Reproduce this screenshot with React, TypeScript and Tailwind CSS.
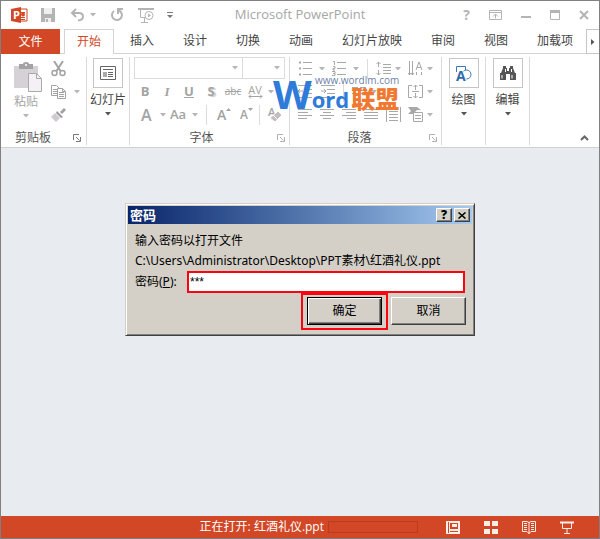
import React, { useState } from 'react';

const tabs = ['开始', '插入', '设计', '切换', '动画', '幻灯片放映', '审阅', '视图', '加载项'];

const Caret = ({ dark = false }: { dark?: boolean }) => (
  <svg width="6" height="4" viewBox="0 0 6 4" className={dark ? 'shrink-0 text-[#555]' : 'shrink-0 text-[#b5b5b5]'}>
    <path d="M0 0h6L3 3.5z" fill="currentColor" />
  </svg>
);

const Launcher = ({ dark = false }: { dark?: boolean }) => (
  <button aria-label="更多选项" className={dark ? 'text-[#777]' : 'text-[#b0b0b0]'}>
    <svg width="8" height="8" viewBox="0 0 8 8" fill="none" stroke="currentColor">
      <path d="M.5 6V.5H6M3 3l3.5 3.5M7.5 3v4.5H3" />
    </svg>
  </button>
);

const Divider = () => <div className="h-5 w-px shrink-0 bg-[#dcdcdc]" />;

type GroupProps = {
  label?: string;
  className: string;
  launcher?: 'dark' | 'light';
  children: React.ReactNode;
};

const Group = ({ label, className, launcher, children }: GroupProps) => (
  <section className={`flex shrink-0 flex-col justify-between border-r border-[#dadada] ${className}`}>
    {children}
    {label && (
      <div className="flex h-[14px] items-center leading-[14px] text-[#555]">
        <span className="flex-1 pr-2 text-center">{label}</span>
        {launcher && <Launcher dark={launcher === 'dark'} />}
      </div>
    )}
  </section>
);

const BigButton = ({ label, children }: { label: string; children: React.ReactNode }) => (
  <button className="flex flex-col items-center pt-px text-[#444]">
    <span className="flex size-[30px] items-center justify-center border border-[#c6c6c6]">{children}</span>
    <span className="mt-1 mb-1 leading-4 whitespace-nowrap">{label}</span>
    <Caret dark />
  </button>
);

// Icon made of horizontal lines, given as [x, y, length]
const Lines = ({ rows, children }: { rows: number[][]; children?: React.ReactNode }) => (
  <svg width="15" height="15" viewBox="0 0 15 15" fill="none" stroke="#a8a8a8" className="shrink-0">
    {rows.map(([x, y, w]) => (
      <path key={`${x}-${y}`} d={`M${x} ${y + 0.5}h${w}`} />
    ))}
    {children}
  </svg>
);

const TitleBar = () => (
  <header className="grid h-7 grid-cols-[1fr_auto_1fr] items-center text-[#b4b4b4]">
    <div className="flex items-center pl-[10px]">
      <svg width="17" height="16" viewBox="0 0 17 16">
        <path d="M9 2h7v12H9z" fill="#fff" stroke="#d24726" />
        <path d="M10 5h4v1h-4zM10 10h4v1h-4zM10 12h4v1h-4z" fill="#d24726" />
        <circle cx="12" cy="7.500" r="2" fill="#d24726" />
        <path d="M0 2 10 0v16L0 14z" fill="#d24726" />
        <text x="2" y="12" fontSize="11" fontWeight="700" fontFamily="Open Sans" fill="#fff">P</text>
      </svg>
      <button aria-label="保存" className="ml-[13px]">
        <svg width="14" height="14" viewBox="0 0 14 14">
          <path d="M0 0h14v14H0z" fill="currentColor" />
          <path d="M3 0h8v6H3zM4 10h6v4H4z" fill="#f1eef1" />
          <path d="M5 11h2v3H5z" fill="currentColor" />
        </svg>
      </button>
      <button aria-label="撤消" className="ml-[15px]">
        <svg width="15" height="14" viewBox="0 0 15 14" fill="none" stroke="currentColor" strokeWidth="2">
          <path d="M6 1 2 5l4 4M2 5h7q4 0 4 3.500T8 12.500" />
        </svg>
      </button>
      <span className="ml-[5px]"><Caret /></span>
      <button aria-label="恢复" className="ml-[14px]">
        <svg width="14" height="14" viewBox="0 0 14 14" fill="none" stroke="currentColor" strokeWidth="2">
          <path d="M9 2.500A5 5 0 1 1 4 3M8 6V1h5" />
        </svg>
      </button>
      <button aria-label="从头开始放映" className="ml-[14px]">
        <svg width="16" height="15" viewBox="0 0 16 15" fill="none" stroke="currentColor">
          <path d="M0 1h16" strokeWidth="2" />
          <path d="M2.500 1v8.500H7M6.500 10v4M3 14.500h7" />
          <circle cx="11" cy="7.500" r="4" fill="#fff" />
          <path d="m10 5.500 3 2-3 2z" fill="currentColor" stroke="none" />
        </svg>
      </button>
      <button aria-label="自定义快速访问工具栏" className="ml-[13px]">
        <svg width="6" height="7" viewBox="0 0 6 7" fill="#777"><path d="M0 0h6v1H0zM0 3h6L3 6z" /></svg>
      </button>
    </div>
    <h1 className="text-[13px] text-[#a6a6a6]">Microsoft PowerPoint</h1>
    <div className="flex items-center justify-end gap-[19px] pr-[10px]">
      <button aria-label="帮助" className="text-[14px] leading-4 font-bold">?</button>
      <button aria-label="功能区显示选项">
        <svg width="13" height="10" viewBox="0 0 13 10" fill="none" stroke="currentColor">
          <path d="M.5.5h12v9H.5zM.5 2.500h12M6.500 8.500V4M4 6.500 6.500 4 9 6.500" />
        </svg>
      </button>
      <button aria-label="最小化">
        <svg width="10" height="10" viewBox="0 0 10 10" fill="currentColor"><path d="M0 6h10v2H0z" /></svg>
      </button>
      <button aria-label="最大化">
        <svg width="10" height="10" viewBox="0 0 10 10" fill="none" stroke="currentColor">
          <path d="M.5.5h9v9h-9z" /><path d="M0 1.500h10" strokeWidth="3" />
        </svg>
      </button>
      <button aria-label="关闭">
        <svg width="10" height="10" viewBox="0 0 10 10" stroke="currentColor" strokeWidth="2"><path d="m1 1 8 8M9 1 1 9" /></svg>
      </button>
    </div>
  </header>
);

const TabBar = () => {
  const [active, setActive] = useState('开始');

  return (
    <nav className="flex h-[25px] text-[#444]">
      <button className="w-[59px] bg-[#d24726] text-white">文件</button>
      <div className="flex flex-1 gap-[3px] border-b border-[#d4d4d4] pl-1">
        {tabs.map((tab) => (
          <button
            key={tab}
            onClick={() => setActive(tab)}
            className={
              tab === active
                ? '-mb-px border border-b-0 border-[#d4d4d4] bg-white px-3 whitespace-nowrap text-[#d24726]'
                : 'px-[13px] whitespace-nowrap'
            }
          >
            {tab}
          </button>
        ))}
      </div>
      <button aria-label="更多选项卡" className="flex w-[13px] items-center justify-center border border-r-0 border-[#c6c6c6]">
        <svg width="4" height="6" viewBox="0 0 4 6"><path d="M0 0v6l3.500-3z" fill="#555" /></svg>
      </button>
    </nav>
  );
};

const ClipboardGroup = () => (
  <Group label="剪贴板" launcher="dark" className="w-[86px] pr-[5px]">
    <div className="flex">
      <button className="ml-3 flex w-[30px] flex-col items-start pt-[5px] text-[#a6a6a6]">
        <svg width="30" height="30" viewBox="0 0 30 30">
          <path d="M1 4h24v22H1z" fill="#d6d1d6" />
          <path d="M6 2h4q0-2 3-2t3 2h4v5H6z" fill="#a3a3a3" />
          <circle cx="13" cy="3" r="1" fill="#fff" />
          <path d="M15.500 11.500h8l5 5v13h-13z" fill="#f4f0f6" stroke="#aaa" />
          <path d="M23.500 11.500v5h5" fill="none" stroke="#aaa" />
        </svg>
        <span className="mt-[2px] mb-1 pl-px leading-4">粘贴</span>
        <span className="flex w-[26px] justify-center"><Caret /></span>
      </button>
      <div className="ml-2 flex flex-col text-[#a3a3a3]">
        <button aria-label="剪切" className="flex h-[23px] items-center">
          <svg width="15" height="16" viewBox="0 0 15 16" fill="none" stroke="currentColor">
            <path d="M3 0l6.500 10M12 0 5.500 10" strokeWidth="2" />
            <circle cx="3.500" cy="12" r="2.500" strokeWidth="1.500" /><circle cx="11.500" cy="12" r="2.500" strokeWidth="1.500" />
          </svg>
        </button>
        <button aria-label="复制" className="flex h-[23px] items-center gap-2">
          <svg width="15" height="14" viewBox="0 0 15 14" fill="#fff" stroke="currentColor">
            <path d="M.5.500h5l3 3v7h-8zM2 4.500h4M2 6.500h4M2 8.500h4" />
            <path d="M6.500 3.500h5l3 3v7h-8zM11.500 3.500v3h3M8 7.500h5M8 9.500h5M8 11.500h5" />
          </svg>
          <Caret />
        </button>
        <button aria-label="格式刷" className="flex h-[23px] items-center">
          <svg width="16" height="14" viewBox="0 0 16 14">
            <path d="m13 0 2 2-4 4-2-2z" fill="#a0a0a0" />
            <path d="m6 3 6 6-2 1-5-5z" fill="#999" />
            <path d="m4 5 5 5-4 4-5-5z" fill="#cfcacf" />
          </svg>
        </button>
      </div>
    </div>
  </Group>
);

const fmt = 'flex w-[22px] shrink-0 items-center justify-center';

const FontGroup = () => (
  <Group label="字体" launcher="light" className="w-[160px] pr-1 pl-1">
    <div className="flex flex-col text-[#a3a3a3]">
      <div className="flex h-[23px]">
        <button role="combobox" aria-label="字体" aria-expanded="false" className="flex h-[22px] w-[109px] items-center justify-end border border-r-0 border-[#dcdcdc] pr-1"><Caret /></button>
        <button role="combobox" aria-label="字号" aria-expanded="false" className="flex h-[22px] w-[43px] items-center justify-end border border-[#dcdcdc] pr-1"><Caret /></button>
      </div>
      <div className="flex h-[23px] text-[13px]">
        <button className={`${fmt} font-bold`}>B</button>
        <button className={`${fmt} font-["Liberation_Serif",serif] font-bold italic`}>I</button>
        <button className={`${fmt} font-bold underline`}>U</button>
        <button className={`${fmt} font-bold [text-shadow:2px_1px_1px_#ccc]`}>S</button>
        <button className={`${fmt} text-[10px] line-through`}>abc</button>
        <button aria-label="字符间距" className={`${fmt} flex-col text-[11px] leading-[9px]`}>
          AV
          <svg width="15" height="5" viewBox="0 0 15 5" fill="none" stroke="currentColor"><path d="M1 2.500h13M3 .5l-2 2 2 2M12 .5l2 2-2 2" /></svg>
        </button>
        <span className="flex items-center pl-[2px]"><Caret /></span>
      </div>
      <div className="flex h-[23px] items-center">
        <button aria-label="字体颜色" className="flex w-9 items-center justify-between pr-1 pl-[7px] text-[16px] leading-5 font-semibold">A<Caret /></button>
        <button aria-label="更改大小写" className="flex w-8 items-center justify-between pr-1 text-[13px] font-semibold">Aa<Caret /></button>
        <span className="pl-1"><Divider /></span>
        <button aria-label="增大字号" className="ml-[10px] flex w-[23px] items-center text-[14px] leading-4 font-semibold">A<svg width="5" height="14" viewBox="0 0 5 14" fill="currentColor"><path d="M0 3 2.500 0 5 3z" /></svg></button>
        <button aria-label="减小字号" className="flex w-[19px] items-center text-[12px] leading-4 font-semibold">A<svg width="5" height="14" viewBox="0 0 5 14" fill="currentColor"><path d="M0 0h5L2.500 3z" /></svg></button>
        <Divider />
        <button aria-label="清除格式" className="ml-2">
          <svg width="15" height="16" viewBox="0 0 15 16" className="overflow-visible">
            <text x="0" y="9" fontSize="11" fontWeight="600" fontFamily="Open Sans" fill="#a3a3a3">A</text>
            <path d="m10 4 4 4-7 7-5-4z" fill="#c2bec2" stroke="#fff" /><path d="m5 8 4 4" stroke="#fff" />
          </svg>
        </button>
      </div>
    </div>
  </Group>
);

const ParagraphGroup = () => (
  <Group label="段落" launcher="light" className="w-[152px] pr-1 pl-2">
    <div className="flex flex-col">
      <div className="flex h-[23px] items-center">
        <button aria-label="项目符号" className="flex w-[34px] items-center gap-[6px]">
          <Lines rows={[[5, 1, 9], [5, 7, 9], [5, 13, 9]]}>
            <path d="M1 1.500h2M1 7.500h2M1 13.500h2" strokeWidth="2" />
          </Lines>
          <Caret />
        </button>
        <button aria-label="编号" className="flex w-[35px] items-center gap-[6px]">
          <Lines rows={[[5, 1, 9], [5, 7, 9], [5, 13, 9]]}>
            <path d="M1 .5h1.500V4M1 5.500h2v2H1V9h2M0 10.500h3v4H0m1-2h2" />
          </Lines>
          <Caret />
        </button>
        <Divider />
        <button aria-label="行距" className="ml-2 flex w-8 items-center gap-1">
          <Lines rows={[[7, 3, 8], [7, 6, 8], [7, 9, 8], [7, 12, 8]]}>
            <path d="M2.500 1v5M.5 3l2-2 2 2M2.500 9v5M.5 12l2 2 2-2" />
          </Lines>
          <Caret />
        </button>
        <button aria-label="文字方向" className="flex items-center gap-1">
          <Lines rows={[]}>
            <path d="M1.500 0v14M4.500 0v14M8 9l3-8 3 8M9 6.500h4M8.500 11v3M13.500 11v3" />
            <path d="m0 12 1.500 2L3 12m0 0 1.500 2L6 12" />
          </Lines>
          <Caret />
        </button>
      </div>
      <div className="flex h-[23px] items-center">
        <button aria-label="减少缩进量" className="w-[23px]">
          <Lines rows={[[0, 1, 14], [6, 5, 8], [6, 9, 8], [0, 13, 14]]}><path d="M5 7H0m2-2L0 7l2 2" /></Lines>
        </button>
        <button aria-label="增加缩进量" className="w-[22px]">
          <Lines rows={[[0, 1, 14], [6, 5, 8], [6, 9, 8], [0, 13, 14]]}><path d="M0 7h5M3 5l2 2-2 2" /></Lines>
        </button>
        <Divider />
        <button aria-label="分栏" className="ml-2 flex w-14 items-center gap-1">
          <Lines rows={[[0, 3, 6], [8, 3, 6], [0, 6, 6], [8, 6, 6], [0, 9, 6], [8, 9, 6]]} />
          <Caret />
        </button>
        <button aria-label="对齐文本" className="flex items-center gap-1">
          <Lines rows={[[4, 7, 7]]}>
            <path d="M4 1.500H.5v12H4M11 1.500h3.500v12H11M7.500 1v5M5.500 3l2-2 2 2M7.500 9v5M5.500 12l2 2 2-2" />
          </Lines>
          <Caret />
        </button>
      </div>
      <div className="flex h-[23px] items-center gap-[7px]">
        <button aria-label="左对齐"><Lines rows={[[0, 2, 14], [0, 5, 10], [0, 8, 14], [0, 11, 9]]} /></button>
        <button aria-label="居中"><Lines rows={[[0, 2, 14], [3, 5, 8], [0, 8, 14], [3, 11, 8]]} /></button>
        <button aria-label="右对齐"><Lines rows={[[0, 2, 14], [4, 5, 10], [0, 8, 14], [5, 11, 9]]} /></button>
        <button aria-label="两端对齐"><Lines rows={[[0, 2, 14], [0, 5, 14], [0, 8, 14], [0, 11, 14]]} /></button>
        <button aria-label="分散对齐"><Lines rows={[[3, 4, 9], [3, 7, 9], [3, 10, 9], [3, 13, 9], [3, 1, 9]]}><path d="M.5 0v15M14.500 0v15" /></Lines></button>
        <button aria-label="转换为 SmartArt" className="flex items-center gap-1">
          <Lines rows={[]}>
            <path d="M0 0h9l4 3H9l-4 4H0l3-3z" fill="#a8a8a8" stroke="none" />
            <path d="M5.500 5.500h9v9h-9z" fill="#fff" />
            <path d="M7 8.500h6M7 11.500h6" />
          </Lines>
          <Caret />
        </button>
      </div>
    </div>
  </Group>
);

const Watermark = () => (
  <div className="pointer-events-none absolute top-[22px] left-[272px] flex h-9 items-end font-['Open_Sans','Noto_Sans_CJK_SC',sans-serif] font-bold">
    <span className="text-[40px] leading-9 text-[#2f7bd9]">W</span>
    <span className="text-[22px] leading-[26px] text-[#2f7bd9]">ord</span>
    <span className="ml-[2px] text-[24px] leading-[26px] font-black text-[#f07830]">联盟</span>
    <span className="absolute -top-1 right-0 text-[10px] leading-4 font-normal text-[#6d7fa8]">www.wordlm.com</span>
  </div>
);

const Ribbon = () => (
  <div className="relative border-b border-[#d0d0d0] pt-[3px] pb-[2px]">
    <div className="flex h-[88px]">
      <ClipboardGroup />
      <Group className="w-[43px]">
        <BigButton label="幻灯片">
          <svg width="16" height="14" viewBox="0 0 16 14" fill="none" stroke="#666">
            <path d="M.5.5h15v13H.5zM3 3.500h10M8 6.500h5M8 8.500h5M8 10.500h5" />
            <path d="M3 6h4v5H3z" fill="#aaa" stroke="none" />
          </svg>
        </BigButton>
      </Group>
      <FontGroup />
      <ParagraphGroup />
      <Group className="w-11">
        <BigButton label="绘图">
          <svg width="17" height="17" viewBox="0 0 17 17" fill="none" stroke="#3c78b4" className="overflow-visible">
            <path d="M1.500 7V1.500h9V5" /><circle cx="11.500" cy="9.500" r="4.500" />
            <text x="1" y="16" fontSize="14" fontWeight="700" fontFamily="Open Sans" fill="#2e6cab" stroke="#fff" strokeWidth="2" paintOrder="stroke">A</text>
          </svg>
        </BigButton>
      </Group>
      <Group className="w-11">
        <BigButton label="编辑">
          <svg width="16" height="14" viewBox="0 0 16 14" fill="#555">
            <path d="M3 0h3v2h1v3h2V2h1V0h3v2l2 5h1v7h-6V8H6v6H0V7h1l2-5z" />
            <path d="M1.500 9h1v3.500h-1zM11.500 9h1v3.500h-1zM5 3h1v3H5zM11 3h1v3h-1z" fill="#fff" />
          </svg>
        </BigButton>
      </Group>
      <button aria-label="折叠功能区" className="mt-auto mr-[10px] mb-1 ml-auto">
        <svg width="9" height="6" viewBox="0 0 9 6" fill="none" stroke="#666" strokeWidth="2"><path d="m1 5 3.500-3.500L8 5" /></svg>
      </button>
    </div>
    <Watermark />
  </div>
);

const raised = 'border border-t-white border-l-white border-r-[#404040] border-b-[#404040] bg-[#d4d0c8] shadow-[inset_-1px_-1px_0_#808080]';

const PasswordDialog = () => {
  const [password, setPassword] = useState('***');

  return (
    <form
      role="dialog"
      aria-labelledby="dialog-title"
      onSubmit={(e) => e.preventDefault()}
      className="w-[350px] border border-t-[#d4d0c8] border-r-[#404040] border-b-[#404040] border-l-[#d4d0c8] bg-[#d4d0c8] p-[2px] pb-[5px] font-['Noto_Sans','Noto_Sans_CJK_SC',sans-serif] text-black shadow-[inset_1px_1px_0_#fff,inset_-1px_-1px_0_#808080]"
    >
      <div className="flex h-[18px] items-center gap-[2px] bg-linear-to-r from-[#0a246a] to-[#a6caf0] pr-[2px] pl-[2px]">
        <h2 id="dialog-title" className="flex-1 text-[13px] leading-4 font-bold text-white">密码</h2>
        <button type="button" aria-label="帮助" className={`flex h-[14px] w-4 items-center justify-center text-[12px] leading-3 font-black ${raised}`}>?</button>
        <button type="button" aria-label="关闭" className={`flex h-[14px] w-4 items-center justify-center ${raised}`}>
          <svg width="8" height="7" viewBox="0 0 8 7" stroke="#000" strokeWidth="1.500"><path d="m.5.500 7 6M7.500.500l-7 6" /></svg>
        </button>
      </div>
      <div className="pt-[7px] pr-[7px] pl-[7px]">
        <p className="leading-5">输入密码以打开文件</p>
        <p className="leading-5 whitespace-nowrap">C:\Users\Administrator\Desktop\PPT素材\红酒礼仪.ppt</p>
        <div className="flex items-center">
          <label htmlFor="password" className="w-[52px] whitespace-nowrap">密码(<u>P</u>):</label>
          <input
            id="password"
            value={password}
            onChange={(e) => setPassword(e.target.value)}
            className="h-[22px] min-w-0 flex-1 border-2 border-[#fa0410] bg-white px-px font-['Liberation_Sans',sans-serif] leading-[18px] outline-none"
          />
        </div>
      </div>
      <div className="flex items-start justify-end gap-[3px] pr-[6px]">
        <div className="border-2 border-[#fa0410] px-1 pt-[2px] pb-[3px]">
          <button type="submit" className="h-7 w-[75px] border border-black bg-[#d4d0c8] shadow-[inset_1px_1px_0_#fff,inset_-1px_-1px_0_#404040,inset_-2px_-2px_0_#808080]">确定</button>
        </div>
        <button type="button" className={`mt-1 h-7 w-[75px] ${raised}`}>取消</button>
      </div>
    </form>
  );
};

const StatusBar = () => (
  <footer className="flex h-[22px] items-center justify-end bg-[#d24726] pr-[25px] text-white">
    <span>正在打开: 红酒礼仪.ppt</span>
    <div role="progressbar" aria-label="正在打开" className="mr-7 ml-1 h-3 w-[90px] border border-[#b93c1e]" />
    <div className="flex gap-6">
      <button aria-label="普通视图">
        <svg width="14" height="13" viewBox="0 0 14 13" fill="#fdeee8">
          <path d="M0 0h14v13H0z" />
          <path d="M2 1h1v11H2zM4 2h8v6H4zM4 10h8v1H4z" fill="#d24726" />
          <path d="M6 3h5v3H6z" />
        </svg>
      </button>
      <button aria-label="幻灯片浏览">
        <svg width="14" height="13" viewBox="0 0 14 13" fill="#fdeee8"><path d="M0 0h6v5H0zM8 0h6v5H8zM0 8h6v5H0zM8 8h6v5H8z" /></svg>
      </button>
      <button aria-label="阅读视图">
        <svg width="14" height="13" viewBox="0 0 14 13" fill="none" stroke="#fdeee8">
          <path d="M.5.500H5l2 1 2-1h4.500v10H9l-2 2-2-2H.5zM7 1v12M2 2.500h3M2 4.500h3M2 6.500h3M2 8.500h3M9 2.500h3M9 4.500h3M9 6.500h3M9 8.500h3" />
        </svg>
      </button>
      <button aria-label="幻灯片放映">
        <svg width="14" height="13" viewBox="0 0 14 13" fill="none" stroke="#fdeee8">
          <path d="M0 1.500h14" strokeWidth="2" /><path d="M2.500 2v5.500h9V2M7 8v4M4 12.500h6" />
        </svg>
      </button>
    </div>
  </footer>
);

export default function App() {
  return (
    <div className="flex min-h-screen flex-col border border-[#808080] bg-white font-['Open_Sans','Noto_Sans_CJK_SC',sans-serif] text-[12px]">
      <TitleBar />
      <TabBar />
      <Ribbon />
      <main className="flex flex-1 items-start justify-center bg-[#e8ebf0] pt-[55px]">
        <PasswordDialog />
      </main>
      <StatusBar />
    </div>
  );
}
